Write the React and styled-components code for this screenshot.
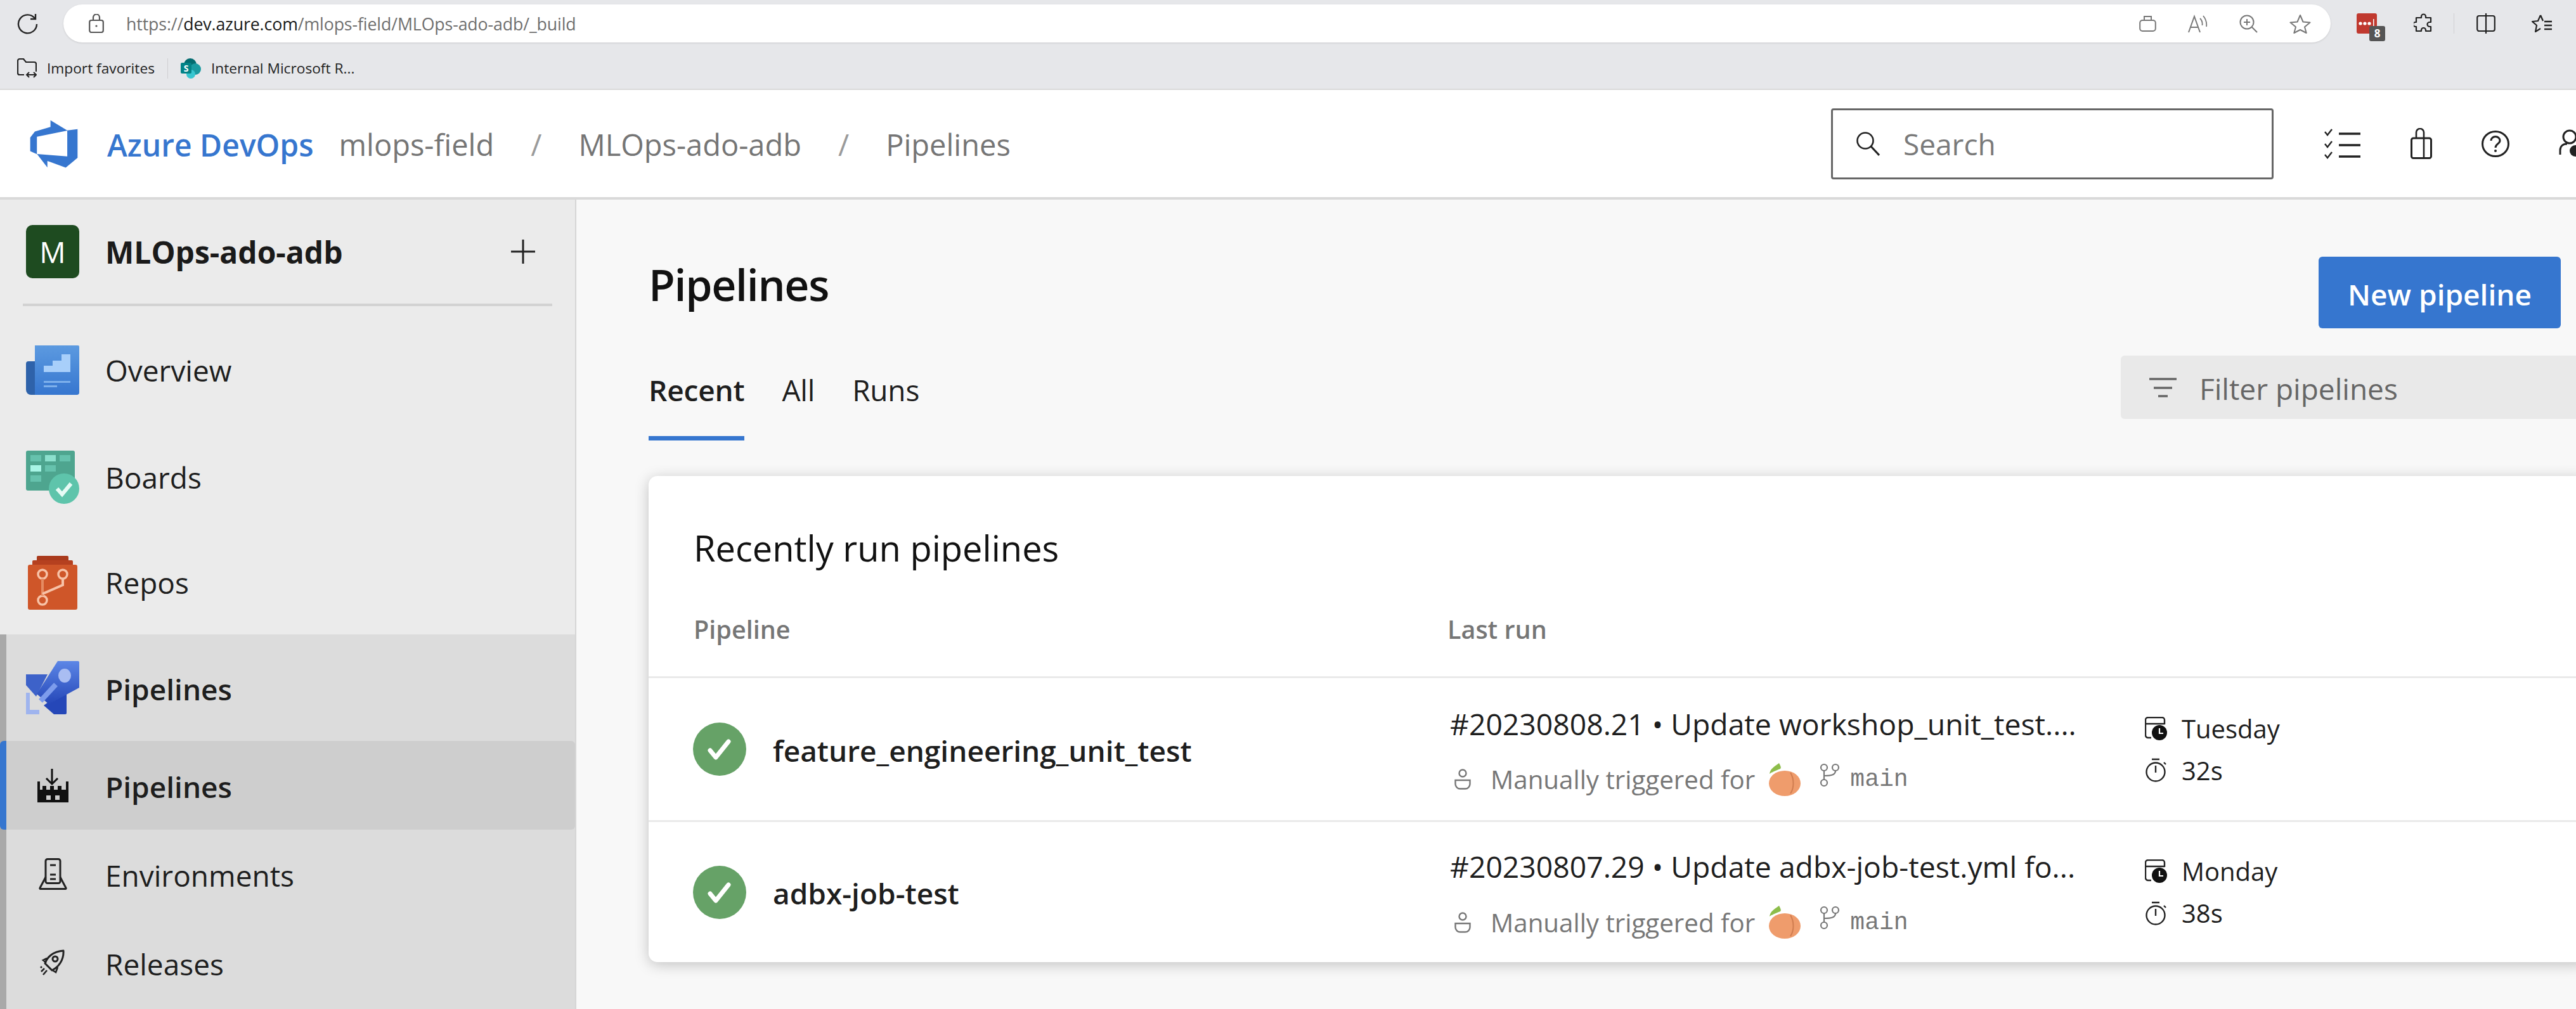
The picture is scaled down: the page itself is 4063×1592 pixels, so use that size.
import React from 'react'
import styled, { createGlobalStyle } from 'styled-components'

const GlobalStyle = createGlobalStyle`
    html, body {
        margin: 0;
        padding: 0;
        background: #f8f8f8;
    }
    * {
        box-sizing: border-box;
    }
    svg {
        flex: none;
    }
`

const Page = styled.div`
    width: 4063px;
    height: 1592px;
    overflow: hidden;
    display: flex;
    flex-direction: column;
    font-family: "Open Sans", "Noto Sans", sans-serif;
    color: #1e1e1e;
`

/* browser chrome */

const BrowserBar = styled.div`
    height: 142px;
    flex: none;
    background: #e6e7ea;
    border-bottom: 2px solid #d9d9d9;
`

const ToolbarRow = styled.div`
    height: 75px;
    padding: 7px 0 8px 27px;
    display: flex;
    align-items: center;
`

const AddressBar = styled.div`
    width: 3576px;
    height: 60px;
    margin-left: 40px;
    padding: 0 31px 0 40px;
    flex: none;
    display: flex;
    align-items: center;
    background: #ffffff;
    border-radius: 30px;
    box-shadow: 0 1px 3px rgba(0, 0, 0, 0.12);
`

const Url = styled.div`
    margin-left: 35px;
    font-size: 26.7px;
    letter-spacing: -0.1px;
    color: #6f6f6f;
    white-space: nowrap;

    b {
        font-weight: 400;
        color: #1a1a1a;
    }
`

const AddressActions = styled.div`
    margin-left: auto;
    display: flex;
    align-items: center;
    gap: 50px;
`

const ToolSlot = styled.div`
    position: relative;
    flex: none;
    display: flex;
    margin-left: ${props => props.$left}px;
`

const Badge = styled.span`
    position: absolute;
    left: 20px;
    top: 20px;
    width: 25px;
    height: 24px;
    border-radius: 3px;
    background: #555555;
    color: #ffffff;
    font-size: 17px;
    font-weight: 700;
    line-height: 24px;
    text-align: center;
`

const ToolDivider = styled.div`
    width: 1px;
    height: 32px;
    margin-left: ${props => props.$left}px;
    background: #cfcfd2;
`

const BookmarkRow = styled.div`
    height: 65px;
    padding-left: 27px;
    display: flex;
    align-items: center;
`

const Bookmark = styled.div`
    display: flex;
    align-items: center;
    gap: 16px;
    font-size: 22.7px;
    color: #222222;
    white-space: nowrap;
`

const BookmarkDivider = styled.div`
    width: 1px;
    height: 32px;
    margin: 0 20px;
    background: #cfcfd2;
`

/* azure devops header */

const Header = styled.header`
    height: 173px;
    flex: none;
    padding-left: 43px;
    display: flex;
    align-items: center;
    background: #ffffff;
    border-bottom: 4px solid #d9d9d9;
`

const Brand = styled.div`
    margin-left: 42px;
    padding-top: 3px;
    font-size: 48px;
    font-weight: 600;
    color: #3676cf;
    white-space: nowrap;
`

const Crumb = styled.div`
    margin-left: ${props => props.$left}px;
    padding-top: 3px;
    font-size: 47px;
    color: #757575;
    white-space: nowrap;
`

const CrumbSlash = styled.div`
    margin-left: 58px;
    padding-top: 3px;
    font-size: 47px;
    color: #9a9a9a;
`

const SearchBox = styled.div`
    width: 698px;
    height: 112px;
    margin-left: auto;
    margin-right: 80px;
    flex: none;
    padding-left: 37px;
    display: flex;
    align-items: center;
    gap: 37px;
    background: #ffffff;
    border: 3px solid #666666;
    border-radius: 4px;
    font-size: 46px;
    color: #7a7a7a;
`

const HeaderIcons = styled.div`
    width: 397px;
    flex: none;
    display: flex;
    align-items: center;
    gap: 78px;
`

/* sidebar */

const Body = styled.div`
    flex: 1;
    min-height: 0;
    display: flex;
`

const Sidebar = styled.nav`
    width: 909px;
    flex: none;
    display: flex;
    flex-direction: column;
    background: #ebebeb;
    border-right: 2px solid #d6d6d6;
`

const ProjectRow = styled.div`
    height: 164px;
    flex: none;
    padding: 0 62px 0 41px;
    display: flex;
    align-items: center;
    gap: 41px;
`

const ProjectAvatar = styled.div`
    width: 84px;
    height: 84px;
    flex: none;
    display: flex;
    align-items: center;
    justify-content: center;
    background: #1e4b20;
    border-radius: 10px;
    color: #ffffff;
    font-size: 46px;
`

const ProjectName = styled.div`
    flex: 1;
    font-size: 48px;
    font-weight: 700;
    color: #1a1a1a;
`

const SidebarDivider = styled.div`
    height: 4px;
    flex: none;
    margin: 0 36px 16px 36px;
    background: #d2d2d2;
`

const NavItem = styled.div`
    height: ${props => props.$height}px;
    flex: none;
    padding-left: ${props => props.$inset}px;
    display: flex;
    align-items: center;
    gap: 41px;
    font-size: 46px;
    font-weight: ${props => props.$strong ? 600 : 400};
    color: #1e1e1e;
`

const NavIcon = styled.div`
    width: 84px;
    flex: none;
    display: flex;
    justify-content: center;
`

const NavLabel = styled.span`
    padding-top: ${props => props.$drop || 0}px;
`

const NavGroup = styled.div`
    flex: 1;
    display: flex;
    flex-direction: column;
    background: #dcdcdc;
    border-left: 10px solid #a9a9a9;
`

const ActiveNavItem = styled(NavItem)`
    margin-left: -10px;
    padding-left: 31px;
    background: #cecece;
    border-left: 10px solid #3676cf;
    border-radius: 6px;
`

/* main content */

const Main = styled.main`
    flex: 1;
    min-width: 0;
    padding: 90px 0 0 114px;
    background: #f8f8f8;
`

const TitleRow = styled.div`
    padding-right: 24px;
    display: flex;
    justify-content: space-between;
    align-items: flex-start;
`

const PageTitle = styled.h1`
    margin: 0;
    font-size: 68px;
    font-weight: 600;
    letter-spacing: -1.3px;
    line-height: 88px;
    color: #111111;
`

const PrimaryButton = styled.button`
    width: 382px;
    height: 113px;
    padding: 4px 0 0 0;
    background: #3676cf;
    border: none;
    border-radius: 6px;
    color: #ffffff;
    font-family: inherit;
    font-size: 46px;
    font-weight: 600;
`

const TabRow = styled.div`
    margin-top: 43px;
    display: flex;
    justify-content: space-between;
    align-items: flex-start;
`

const Tabs = styled.div`
    display: flex;
    gap: 59px;
`

const Tab = styled.div`
    height: 134px;
    padding-bottom: 19px;
    line-height: 108px;
    font-size: 46px;
    font-weight: ${props => props.$active ? 600 : 400};
    letter-spacing: -0.2px;
    border-bottom: 7px solid ${props => props.$active ? '#3676cf' : 'transparent'};
    color: #1e1e1e;
`

const FilterBox = styled.div`
    width: 718px;
    height: 100px;
    padding-left: 45px;
    display: flex;
    align-items: center;
    gap: 36px;
    background: #e9e9e9;
    border-radius: 6px 0 0 6px;
    font-size: 46px;
    color: #666666;
`

const FilterLabel = styled.span`
    padding-top: 3px;
`

const Card = styled.section`
    height: 767px;
    margin: 56px -20px 0 0;
    background: #ffffff;
    border-radius: 14px;
    box-shadow: 0 4px 22px rgba(0, 0, 0, 0.22);
`

const CardTitle = styled.h2`
    margin: 0;
    padding: 73px 0 0 71px;
    height: 155px;
    font-size: 56px;
    font-weight: 400;
    line-height: 80px;
    color: #111111;
`

const ColumnRow = styled.div`
    height: 161px;
    padding: 47px 0 0 71px;
    display: grid;
    grid-template-columns: 1189px 1fr;
    font-size: 39.5px;
    font-weight: 600;
    line-height: 80px;
    color: #767676;
`

const PipelineRow = styled.div`
    height: ${props => props.$height}px;
    padding-left: 70px;
    display: grid;
    grid-template-columns: 126px 1064px 1100px 1fr;
    align-items: center;
    border-top: 3px solid #eaeaea;
`

const PipelineName = styled.div`
    padding-top: 3px;
    font-size: 46px;
    font-weight: 600;
    color: #1e1e1e;
`

const RunCell = styled.div`
    padding-top: 8px;
    display: flex;
    flex-direction: column;
    gap: 27px;
`

const RunTitle = styled.div`
    padding-left: 4px;
    font-size: 46.3px;
    line-height: 60px;
    color: #1e1e1e;
    white-space: nowrap;
`

const RunMeta = styled.div`
    padding-left: 11px;
    height: 60px;
    display: flex;
    align-items: center;
    font-size: 40.3px;
    color: #777777;
    white-space: nowrap;
`

const MetaLabel = styled.span`
    margin-left: ${props => props.$left}px;
`

const BranchName = styled.span`
    margin-left: 16px;
    font-family: "Liberation Mono", monospace;
    font-size: 38px;
    color: #777777;
`

const MetaIcon = styled.div`
    flex: none;
    display: flex;
    margin-left: ${props => props.$left}px;
    margin-bottom: ${props => props.$lift || 0}px;
`

const TimeCell = styled.div`
    display: flex;
    flex-direction: column;
    gap: 21px;
`

const TimeLine = styled.div`
    height: 45px;
    display: flex;
    align-items: center;
    gap: 23px;
    font-size: 40px;
    color: #1e1e1e;
`

/* icons */

const Svg = ({ w, h, children, ...rest }) => (
    <svg width={w} height={h} viewBox={`0 0 ${w} ${h}`} fill="none" {...rest}>{children}</svg>
)

const ReloadIcon = () => (
    <Svg w={33} h={33}>
        <path d="M28 8A14.5 14.5 0 1 0 31 17" stroke="#222" strokeWidth="2.4" />
        <path d="M29 1v8h-8" stroke="#222" strokeWidth="2.4" />
    </Svg>
)

const LockIcon = () => (
    <Svg w={24} h={30}>
        <rect x="1.2" y="10" width="21.6" height="19" rx="3" stroke="#555" strokeWidth="2.2" />
        <path d="M7 10V5.5a5 5 0 0 1 10 0V10" stroke="#555" strokeWidth="2.2" />
        <circle cx="12" cy="19" r="1.6" fill="#555" />
    </Svg>
)

const WalletIcon = () => (
    <Svg w={27} h={26}>
        <rect x="1.2" y="8" width="24.6" height="17" rx="4" stroke="#777" strokeWidth="2" />
        <path d="M8 8V2h11v6" stroke="#777" strokeWidth="2" />
    </Svg>
)

const ReadAloudIcon = () => (
    <Svg w={31} h={29}>
        <path d="M1 28L10 3l9 25M4.5 20h11" stroke="#777" strokeWidth="2" />
        <path d="M19 6c3 3 4 7 3.5 11M24 2c4 5 6 11 5 17" stroke="#777" strokeWidth="1.8" />
    </Svg>
)

const ZoomIcon = () => (
    <Svg w={29} h={29}>
        <circle cx="12" cy="12" r="10.5" stroke="#777" strokeWidth="2" />
        <path d="M19.5 19.5L28 28M12 7v10M7 12h10" stroke="#777" strokeWidth="2" />
    </Svg>
)

const StarIcon = () => (
    <Svg w={34} h={31}>
        <path d="M17 2l4.5 10.5 11 1-8.500 7 2.700 9.500L17 25l-9.700 5 2.700-9.500-8.500-7 11-1z" stroke="#777" strokeWidth="2" strokeLinejoin="round" />
    </Svg>
)

const LastPassIcon = () => (
    <Svg w={32} h={32}>
        <rect width="32" height="32" rx="3" fill="#c0392f" />
        <circle cx="6" cy="16" r="2.6" fill="#fff" />
        <circle cx="13" cy="16" r="2.6" fill="#fff" />
        <circle cx="20" cy="16" r="2.6" fill="#fff" />
        <rect x="26" y="9" width="1.5" height="14" fill="#fff" />
    </Svg>
)

const PuzzleIcon = () => (
    <Svg w={31} h={32}>
        <path d="M12 5a3.5 3.5 0 0 1 7 0v2h8v7h-2a3.5 3.5 0 0 0 0 7h2v7h-8v-1.500a3.500 3.500 0 0 0-7 0V28H4v-7H2.500a3.500 3.500 0 0 1 0-7H4V7h8z" stroke="#222" strokeWidth="2.2" strokeLinejoin="round" />
    </Svg>
)

const SplitIcon = () => (
    <Svg w={30} h={32}>
        <rect x="1.2" y="4" width="27.6" height="24" rx="3" stroke="#222" strokeWidth="2.2" />
        <path d="M15 0v32" stroke="#222" strokeWidth="2.2" />
    </Svg>
)

const FavoritesIcon = () => (
    <Svg w={33} h={30}>
        <path d="M14 2l-4 9-9 1 7 6-2 10 8-5" stroke="#222" strokeWidth="2.2" strokeLinejoin="round" />
        <path d="M14 2l4 9M20 12h12M20 18h12M20 24h12" stroke="#222" strokeWidth="2.4" />
    </Svg>
)

const ImportFolderIcon = () => (
    <Svg w={31} h={31}>
        <path d="M11 26H4a3 3 0 0 1-3-3V4a3 3 0 0 1 3-3h6l4 5h13a3 3 0 0 1 3 3v12" stroke="#222" strokeWidth="2.2" />
        <path d="M15 26h15M19 22l-4 4 4 4M26 22l4 4-4 4" stroke="#222" strokeWidth="2" />
    </Svg>
)

const SharePointIcon = () => (
    <Svg w={32} h={32}>
        <circle cx="15" cy="10" r="10" fill="#036c70" />
        <circle cx="23" cy="17" r="9" fill="#1a9ba1" />
        <circle cx="16" cy="25" r="7" fill="#37c6d0" />
        <rect y="7" width="17" height="17" rx="2" fill="#038387" />
        <text x="8.5" y="21" fontSize="14" fontWeight="700" fill="#fff" textAnchor="middle">S</text>
    </Svg>
)

const AzureLogo = () => (
    <svg width="84" height="84" viewBox="0 0 18 18">
        <path fill="#3676cf" d="M17 4v9.74l-4 3.28-6.200-2.260V17l-3.510-4.590 10.230.8V4.440zm-3.410.49L7.850 1v2.290L2.580 4.840 1 6.870v4.610l2.260 1V6.570z" />
    </svg>
)

const MagnifierIcon = () => (
    <Svg w={37} h={38}>
        <circle cx="14" cy="14" r="12.5" stroke="#222" strokeWidth="2.6" />
        <path d="M23 23l13 14" stroke="#222" strokeWidth="3" />
    </Svg>
)

const ChecklistIcon = () => (
    <Svg w={58} h={48}>
        <path d="M1 5l4 5 7-9M1 24l4 5 7-9M1 41l4 5 7-9" stroke="#222" strokeWidth="2.4" />
        <path d="M23 8h34M23 26h34M23 44h34" stroke="#222" strokeWidth="3.6" />
    </Svg>
)

const BagIcon = () => (
    <Svg w={34} h={49}>
        <rect x="1.5" y="16" width="31" height="31.5" rx="3" stroke="#222" strokeWidth="3" />
        <path d="M9 16V7a6 6 0 0 1 12 0v9M21 16v31" stroke="#222" strokeWidth="2.6" />
    </Svg>
)

const HelpIcon = () => (
    <Svg w={44} h={42}>
        <ellipse cx="22" cy="21" rx="20.5" ry="19.5" stroke="#222" strokeWidth="3" />
        <path d="M15 16a7 6.500 0 0 1 14 0c0 5-7 5-7 11" stroke="#222" strokeWidth="3" />
        <circle cx="22" cy="32" r="2" fill="#222" />
    </Svg>
)

const PersonGearIcon = () => (
    <Svg w={44} h={46}>
        <circle cx="17" cy="12" r="10" stroke="#222" strokeWidth="3" />
        <path d="M2 40V33c0-6 4-10 11-10" stroke="#222" strokeWidth="3" />
        <circle cx="26" cy="34" r="9" fill="#222" />
    </Svg>
)

const PlusIcon = () => (
    <Svg w={40} h={40}>
        <path d="M20 1v38M1 20h38" stroke="#222" strokeWidth="3" />
    </Svg>
)

const OverviewIcon = () => (
    <Svg w={84} h={78}>
        <defs>
            <linearGradient id="overviewFill" x1="0" y1="0" x2="0" y2="1">
                <stop offset="0" stopColor="#5c9ae0" />
                <stop offset="1" stopColor="#3676cf" />
            </linearGradient>
        </defs>
        <path d="M4 25h16v53H8a8 8 0 0 1-8-8V29a4 4 0 0 1 4-4z" fill="#2e62aa" />
        <path d="M14 0h68a2 2 0 0 1 2 2v72a4 4 0 0 1-4 4H14z" fill="url(#overviewFill)" />
        <path d="M28 32h14v-8h14V14h14v28H28z" fill="#a8cffa" />
        <rect x="28" y="56" width="42" height="3" fill="#7db0ec" />
        <rect x="28" y="63" width="21" height="3" fill="#7db0ec" />
    </Svg>
)

const BoardsIcon = () => (
    <Svg w={84} h={84}>
        <rect width="77" height="63" rx="3" fill="#4ea58f" />
        <rect x="7" y="7" width="17" height="10" fill="#66c2ad" />
        <rect x="30" y="7" width="17" height="10" fill="#8ce0cd" />
        <rect x="53" y="7" width="17" height="10" fill="#66c2ad" />
        <rect x="7" y="23" width="17" height="10" fill="#a8f5e6" />
        <rect x="30" y="23" width="17" height="10" fill="#66c2ad" />
        <rect x="7" y="39" width="17" height="10" fill="#66c2ad" />
        <circle cx="60" cy="60" r="24" fill="#5ec4ab" />
        <path d="M49 60l8 9 14-17" stroke="#e6fbf5" strokeWidth="6" />
    </Svg>
)

const ReposIcon = () => (
    <Svg w={78} h={85}>
        <rect x="14" width="50" height="12" rx="2" fill="#a93a1c" />
        <rect x="7" y="7" width="64" height="14" rx="2" fill="#b5401f" />
        <rect y="14" width="78" height="71" rx="3" fill="#cf5629" />
        <circle cx="23" cy="29" r="7" stroke="#f7c2a7" strokeWidth="3.5" />
        <circle cx="55" cy="29" r="7" stroke="#f7c2a7" strokeWidth="3.5" />
        <circle cx="23" cy="70" r="7" stroke="#f7c2a7" strokeWidth="3.5" />
        <path d="M23 36v27" stroke="#e58b62" strokeWidth="4" />
        <path d="M55 36v10L23 60" stroke="#f7c2a7" strokeWidth="4" />
    </Svg>
)

const PipelinesIcon = () => (
    <Svg w={84} h={84}>
        <defs>
            <linearGradient id="rocketFill" x1="0" y1="0" x2="0" y2="1">
                <stop offset="0" stopColor="#5c86e6" />
                <stop offset="1" stopColor="#2547b8" />
            </linearGradient>
        </defs>
        <path d="M0 21h34L16 56 0 38z" fill="#3d62c9" />
        <path d="M64 44v38a2 2 0 0 1-2 2H44L28 70z" fill="#2547b8" />
        <path d="M50 0h32a2 2 0 0 1 2 2v40L36 68 17 52z" fill="url(#rocketFill)" />
        <ellipse cx="61" cy="23" rx="10" ry="11" fill="#a9bdf2" />
        <path d="M47 37L23 63" stroke="#7d9cec" strokeWidth="8" />
        <path d="M0 50h6v27h15v7H0z" fill="#9fb4ee" />
    </Svg>
)

const FactoryIcon = () => (
    <Svg w={49} h={53}>
        <path d="M23 0v23M14 15l9 9 9-9" stroke="#111" strokeWidth="3" />
        <path d="M0 20h4v13h41V20h4v33H0z" fill="#111" />
        <rect x="8" y="27" width="6" height="6" fill="#111" />
        <rect x="20" y="27" width="6" height="6" fill="#111" />
        <rect x="32" y="27" width="6" height="6" fill="#111" />
        <rect x="14" y="42" width="7" height="7" fill="#cecece" />
        <rect x="28" y="42" width="7" height="7" fill="#cecece" />
    </Svg>
)

const EnvironmentIcon = () => (
    <Svg w={45} h={50}>
        <rect x="11" y="1.5" width="23" height="38" rx="3" stroke="#222" strokeWidth="3" />
        <path d="M18 11h9M18 26h9M18 33h9" stroke="#222" strokeWidth="3" />
        <path d="M11 30l-9 17a1 1 0 0 0 1 1.500h39a1 1 0 0 0 1-1.500l-9-17" stroke="#222" strokeWidth="3" />
    </Svg>
)

const ReleaseIcon = () => (
    <Svg w={40} h={42}>
        <path d="M13 27l-5-5c3-9 12-19 29-20 1 15-8 26-18 31z" stroke="#222" strokeWidth="3" strokeLinejoin="round" />
        <circle cx="24" cy="15" r="4" stroke="#222" strokeWidth="3" />
        <path d="M11 14l-6 3 5 4M28 28l-3 8-5-3M7 30l-5 5M11 33l-6 7M3 27l-2 2" stroke="#222" strokeWidth="2.6" />
    </Svg>
)

const FilterIcon = () => (
    <Svg w={43} h={31}>
        <path d="M0 2h43M7 16h29M14 29h15" stroke="#666" strokeWidth="3.5" />
    </Svg>
)

const StatusIcon = () => (
    <Svg w={84} h={84}>
        <circle cx="42" cy="42" r="42" fill="#66a267" />
        <path d="M27 44l9 11 20-25" stroke="#fff" strokeWidth="7" strokeLinecap="round" strokeLinejoin="round" />
    </Svg>
)

const PersonIcon = () => (
    <Svg w={26} h={33}>
        <circle cx="13" cy="7" r="5.5" stroke="#777" strokeWidth="2.4" />
        <path d="M1.500 18h23v6a7.500 7.500 0 0 1-7.500 7.500H9A7.500 7.500 0 0 1 1.500 24z" stroke="#777" strokeWidth="2.4" />
    </Svg>
)

const PeachIcon = () => (
    <Svg w={51} h={52}>
        <ellipse cx="26" cy="32" rx="25" ry="20" fill="#ef9c6c" />
        <path d="M35 15c6 10 6 24 0 33" stroke="#d07d50" strokeWidth="2" />
        <path d="M2 17C3 9 10 5 17 0c2 4 4 7 2 9C14 11 8 13 2 17z" fill="#8dbd4a" />
    </Svg>
)

const BranchIcon = () => (
    <Svg w={32} h={38}>
        <circle cx="7" cy="7" r="5" stroke="#777" strokeWidth="2.2" />
        <circle cx="25" cy="7" r="5" stroke="#777" strokeWidth="2.2" />
        <circle cx="7" cy="31" r="5" stroke="#777" strokeWidth="2.2" />
        <path d="M7 12v14M25 12c0 6-5 8-18 8" stroke="#777" strokeWidth="2.2" />
    </Svg>
)

const CalendarClockIcon = () => (
    <Svg w={35} h={37}>
        <path d="M10 33H5a4 4 0 0 1-4-4V5a4 4 0 0 1 4-4h22a4 4 0 0 1 4 4v7M1 11h30" stroke="#222" strokeWidth="2.4" />
        <circle cx="23" cy="25" r="12" fill="#111" />
        <path d="M23 18v8h6" stroke="#fff" strokeWidth="2.2" />
    </Svg>
)

const StopwatchIcon = () => (
    <Svg w={35} h={38}>
        <circle cx="17" cy="22" r="14.5" stroke="#222" strokeWidth="2.4" />
        <path d="M11 2h12M17 12v11M30 7l3 3" stroke="#222" strokeWidth="2.4" />
    </Svg>
)

const pipelineRuns = [
    {
        name: 'feature_engineering_unit_test',
        title: '#20230808.21 • Update workshop_unit_test....',
        day: 'Tuesday',
        duration: '32s',
        height: 227,
    },
    {
        name: 'adbx-job-test',
        title: '#20230807.29 • Update adbx-job-test.yml fo...',
        day: 'Monday',
        duration: '38s',
        height: 224,
    },
]

const App = () => {
    return (
        <Page>
            <GlobalStyle />
            <BrowserBar>
                <ToolbarRow>
                    <ReloadIcon />
                    <AddressBar>
                        <LockIcon />
                        <Url>https://<b>dev.azure.com</b>/mlops-field/MLOps-ado-adb/_build</Url>
                        <AddressActions>
                            <WalletIcon />
                            <ReadAloudIcon />
                            <ZoomIcon />
                            <StarIcon />
                        </AddressActions>
                    </AddressBar>
                    <ToolSlot $left={41}>
                        <LastPassIcon />
                        <Badge>8</Badge>
                    </ToolSlot>
                    <ToolSlot $left={58}><PuzzleIcon /></ToolSlot>
                    <ToolDivider $left={32} />
                    <ToolSlot $left={35}><SplitIcon /></ToolSlot>
                    <ToolSlot $left={57}><FavoritesIcon /></ToolSlot>
                </ToolbarRow>
                <BookmarkRow>
                    <Bookmark><ImportFolderIcon />Import favorites</Bookmark>
                    <BookmarkDivider />
                    <Bookmark><SharePointIcon />Internal Microsoft R...</Bookmark>
                </BookmarkRow>
            </BrowserBar>

            <Header>
                <AzureLogo />
                <Brand>Azure DevOps</Brand>
                <Crumb $left={40}>mlops-field</Crumb>
                <CrumbSlash>/</CrumbSlash>
                <Crumb $left={58}>MLOps-ado-adb</Crumb>
                <CrumbSlash>/</CrumbSlash>
                <Crumb $left={58}>Pipelines</Crumb>
                <SearchBox><MagnifierIcon />Search</SearchBox>
                <HeaderIcons>
                    <ChecklistIcon />
                    <BagIcon />
                    <HelpIcon />
                    <PersonGearIcon />
                </HeaderIcons>
            </Header>

            <Body>
                <Sidebar>
                    <ProjectRow>
                        <ProjectAvatar>M</ProjectAvatar>
                        <ProjectName>MLOps-ado-adb</ProjectName>
                        <PlusIcon />
                    </ProjectRow>
                    <SidebarDivider />
                    <NavItem $height={169} $inset={41}><NavIcon><OverviewIcon /></NavIcon><NavLabel>Overview</NavLabel></NavItem>
                    <NavItem $height={169} $inset={41}><NavIcon><BoardsIcon /></NavIcon><NavLabel>Boards</NavLabel></NavItem>
                    <NavItem $height={164} $inset={41}><NavIcon><ReposIcon /></NavIcon><NavLabel>Repos</NavLabel></NavItem>
                    <NavGroup>
                        <NavItem $height={168} $inset={31} $strong><NavIcon><PipelinesIcon /></NavIcon><NavLabel $drop={4}>Pipelines</NavLabel></NavItem>
                        <ActiveNavItem $height={140} $inset={31} $strong><NavIcon><FactoryIcon /></NavIcon><NavLabel $drop={4}>Pipelines</NavLabel></ActiveNavItem>
                        <NavItem $height={140} $inset={31}><NavIcon><EnvironmentIcon /></NavIcon><NavLabel $drop={4}>Environments</NavLabel></NavItem>
                        <NavItem $height={140} $inset={31}><NavIcon><ReleaseIcon /></NavIcon><NavLabel $drop={4}>Releases</NavLabel></NavItem>
                    </NavGroup>
                </Sidebar>

                <Main>
                    <TitleRow>
                        <PageTitle>Pipelines</PageTitle>
                        <PrimaryButton>New pipeline</PrimaryButton>
                    </TitleRow>
                    <TabRow>
                        <Tabs>
                            <Tab $active>Recent</Tab>
                            <Tab>All</Tab>
                            <Tab>Runs</Tab>
                        </Tabs>
                        <FilterBox><FilterIcon /><FilterLabel>Filter pipelines</FilterLabel></FilterBox>
                    </TabRow>
                    <Card>
                        <CardTitle>Recently run pipelines</CardTitle>
                        <ColumnRow>
                            <div>Pipeline</div>
                            <div>Last run</div>
                        </ColumnRow>
                        {pipelineRuns.map(run => (
                            <PipelineRow key={run.name} $height={run.height}>
                                <StatusIcon />
                                <PipelineName>{run.name}</PipelineName>
                                <RunCell>
                                    <RunTitle>{run.title}</RunTitle>
                                    <RunMeta>
                                        <PersonIcon />
                                        <MetaLabel $left={31}>Manually triggered for</MetaLabel>
                                        <MetaIcon $left={21}><PeachIcon /></MetaIcon>
                                        <MetaIcon $left={30} $lift={14}><BranchIcon /></MetaIcon>
                                        <BranchName>main</BranchName>
                                    </RunMeta>
                                </RunCell>
                                <TimeCell>
                                    <TimeLine><CalendarClockIcon />{run.day}</TimeLine>
                                    <TimeLine><StopwatchIcon />{run.duration}</TimeLine>
                                </TimeCell>
                            </PipelineRow>
                        ))}
                    </Card>
                </Main>
            </Body>
        </Page>
    )
}

export default App
